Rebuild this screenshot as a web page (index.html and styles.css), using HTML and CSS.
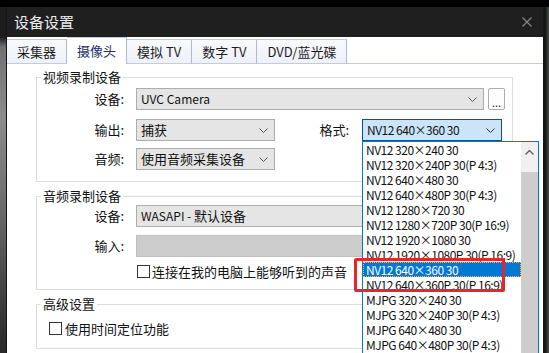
FILE: index.html
```html
<!DOCTYPE html>
<html lang="zh-CN">
<head>
    <meta charset="UTF-8">
    <meta name="viewport" content="width=device-width, initial-scale=1.0">
    <title>设备设置</title>
    <link rel="stylesheet" href="styles.css">
</head>
<body>
    <div class="screen">
        <div class="backdrop-left"></div>

        <div class="dialog">
            <div class="titlebar">
                <span class="title">设备设置</span>
                <svg class="close" width="10" height="10" viewBox="0 0 10 10">
                    <path d="M0.5 0.5 L9.5 9.5 M9.5 0.5 L0.5 9.5" stroke="#8c8c8c" stroke-width="1.1" fill="none"/>
                </svg>
            </div>

            <div class="tabs">
                <div class="tab">采集器</div>
                <div class="tab active">摄像头</div>
                <div class="tab">模拟 TV</div>
                <div class="tab">数字 TV</div>
                <div class="tab">DVD/蓝光碟</div>
            </div>

            <div class="page">
                <!-- video capture -->
                <fieldset class="group group-video">
                    <legend>视频录制设备</legend>
                    <div class="row">
                        <span class="label">设备:</span>
                        <div class="combo combo-device">
                            <span class="latin">UVC Camera</span>
                            <svg class="chevron" width="9" height="5" viewBox="0 0 9 5"><path d="M0.5 0.5 L4.5 4.5 L8.5 0.5" stroke="#555" fill="none"/></svg>
                        </div>
                        <button class="more">...</button>
                    </div>
                    <div class="row row-output">
                        <span class="label">输出:</span>
                        <div class="combo combo-small">
                            <span>捕获</span>
                            <svg class="chevron" width="9" height="5" viewBox="0 0 9 5"><path d="M0.5 0.5 L4.5 4.5 L8.5 0.5" stroke="#555" fill="none"/></svg>
                        </div>
                        <span class="label label-format">格式:</span>
                        <div class="combo combo-small focused">
                            <span class="latin spec">NV12 640×360 30</span>
                            <svg class="chevron" width="9" height="5" viewBox="0 0 9 5"><path d="M0.5 0.5 L4.5 4.5 L8.5 0.5" stroke="#333" fill="none"/></svg>
                        </div>
                    </div>
                    <div class="row row-audio">
                        <span class="label">音频:</span>
                        <div class="combo combo-small">
                            <span>使用音频采集设备</span>
                            <svg class="chevron" width="9" height="5" viewBox="0 0 9 5"><path d="M0.5 0.5 L4.5 4.5 L8.5 0.5" stroke="#555" fill="none"/></svg>
                        </div>
                    </div>
                </fieldset>

                <!-- audio capture -->
                <fieldset class="group group-sound">
                    <legend>音频录制设备</legend>
                    <div class="row">
                        <span class="label">设备:</span>
                        <div class="combo combo-long">
                            <span><span class="latin">WASAPI - </span>默认设备</span>
                        </div>
                    </div>
                    <div class="row row-input">
                        <span class="label">输入:</span>
                        <div class="combo combo-long disabled"></div>
                    </div>
                    <div class="check-row check-listen">
                        <span class="checkbox"></span>
                        <span>连接在我的电脑上能够听到的声音</span>
                    </div>
                </fieldset>

                <!-- advanced -->
                <fieldset class="group group-advanced">
                    <legend>高级设置</legend>
                    <div class="check-row check-seek">
                        <span class="checkbox"></span>
                        <span>使用时间定位功能</span>
                    </div>
                </fieldset>
            </div>

            <!-- open format list -->
            <div class="droplist">
                <div class="items">
                    <div class="item">NV12 320×240 30</div>
                    <div class="item">NV12 320×240P 30(P 4:3)</div>
                    <div class="item">NV12 640×480 30</div>
                    <div class="item">NV12 640×480P 30(P 4:3)</div>
                    <div class="item">NV12 1280×720 30</div>
                    <div class="item">NV12 1280×720P 30(P 16:9)</div>
                    <div class="item">NV12 1920×1080 30</div>
                    <div class="item">NV12 1920×1080P 30(P 16:9)</div>
                    <div class="item selected">NV12 640×360 30</div>
                    <div class="item">NV12 640×360P 30(P 16:9)</div>
                    <div class="item">MJPG 320×240 30</div>
                    <div class="item">MJPG 320×240P 30(P 4:3)</div>
                    <div class="item">MJPG 640×480 30</div>
                    <div class="item">MJPG 640×480P 30(P 4:3)</div>
                </div>
                <div class="scrollbar">
                    <div class="scroll-up">
                        <svg width="9" height="5" viewBox="0 0 9 5"><path d="M0.5 4.5 L4.5 0.5 L8.5 4.5" stroke="#606060" stroke-width="1.4" fill="none"/></svg>
                    </div>
                    <div class="scroll-thumb"></div>
                </div>
            </div>

            <div class="mark"></div>
        </div>

        <div class="backdrop-right"></div>
    </div>
</body>
</html>
```

FILE: styles.css
```css
html, body {
    margin: 0;
    height: 353px;
    overflow: hidden;
}

body {
    background: #000;
    padding-top: 7px;
    box-sizing: border-box;
    font-family: "Noto Sans CJK SC", "Microsoft YaHei", sans-serif;
    font-size: 13px;
    color: #111;
}

/* latin text runs a point smaller than the CJK text */
.latin {
    font-size: 12px;
}

.spec {
    letter-spacing: -0.5px;
}

.screen {
    display: flex;
    height: 346px;
}

.backdrop-left {
    width: 7px;
    background: linear-gradient(180deg, #1c1c1c 0px, #1c1c1c 30px, #6e7072 40px, #8a8c8e 110px, #6a6c6e 200px, #3a3a3a 300px, #2a2a2a 346px);
    border-right: 1px solid #151515;
    box-sizing: border-box;
}

.backdrop-right {
    flex: 1;
    background: linear-gradient(90deg, #161616 0px, #161616 3px, #2f3a30 4px, #3d4a3c 6px);
}

.dialog {
    position: relative;
    width: 536px;
    height: 346px;
    background: #fff;
    display: flex;
    flex-direction: column;
    overflow: hidden;
}

.titlebar {
    height: 30px;
    flex: none;
    background: #1f1f1f;
    display: flex;
    align-items: center;
    padding-left: 7px;
}

.title {
    color: #ececec;
    font-size: 15px;
    line-height: 20px;
}

.close {
    margin-left: auto;
    margin-right: 11px;
}

.tabs {
    display: flex;
    align-items: flex-end;
    height: 26px;
    flex: none;
    border-bottom: 1px solid #c3cbde;
    background: #fff;
}

.tab {
    height: 25px;
    box-sizing: border-box;
    padding: 0 10px;
    line-height: 24px;
    background: linear-gradient(180deg, #f8f9fc, #eef1f8);
    border-top: 1px solid #c3cbde;
    border-right: 1px solid #aeb8d2;
    color: #1c1c1c;
    margin-bottom: -1px;
    border-bottom: 1px solid #c3cbde;
}

.tab.active {
    height: 27px;
    background: #fff;
    border-bottom: none;
    line-height: 26px;
    color: #23306a;
}

.page {
    flex: 1;
}

.group {
    margin: 0 30px 0 29px;
    padding: 0 0 11px 0;
    border: 1px solid #dcdcdc;
    min-width: 0;
}

.group legend {
    margin-left: 4px;
    padding: 0 2px;
    line-height: 16px;
    font-size: 13px;
    color: #111;
}

.group-video {
    margin-top: 5px;
    padding-top: 3px;
}

.group-sound {
    margin-top: 6px;
    padding-top: 1px;
    padding-bottom: 10px;
}

.group-advanced {
    margin-top: 6px;
    padding-top: 9px;
    padding-bottom: 12px;
}

.row {
    display: flex;
    align-items: center;
    height: 22px;
}

.row-output {
    margin-top: 9px;
}

.row-audio {
    margin-top: 7px;
}

.row-input {
    margin-top: 8px;
}

.label {
    width: 87px;
    margin-right: 12px;
    text-align: right;
    line-height: 16px;
}

.label-format {
    width: 74px;
    margin-right: 13px;
}

.combo {
    height: 22px;
    box-sizing: border-box;
    border: 1px solid #adadad;
    background: #e5e5e5;
    display: flex;
    align-items: center;
    padding: 0 6px 0 4px;
    line-height: 18px;
    white-space: nowrap;
}

.combo .chevron {
    margin-left: auto;
    flex: none;
}

.combo-device {
    width: 348px;
}

.combo-small {
    width: 139px;
}

.combo-small.focused {
    width: 140px;
}

.combo-long {
    width: 369px;
}

.combo.focused {
    background: #cce4f7;
    border-color: #005499;
}

.combo.disabled {
    background: #cccccc;
    border-color: #bfbfbf;
}

.more {
    width: 17px;
    height: 22px;
    margin-left: 4px;
    padding: 0;
    border: 1px solid #adadad;
    border-radius: 2px;
    background: #fdfdfd;
    font-family: inherit;
    font-size: 11px;
    line-height: 26px;
    color: #222;
}

.check-row {
    display: flex;
    align-items: center;
    height: 15px;
    line-height: 15px;
}

.check-listen {
    margin-top: 7px;
    padding-left: 100px;
}

.check-seek {
    padding-left: 12px;
}

.checkbox {
    width: 13px;
    height: 13px;
    box-sizing: border-box;
    border: 1px solid #333;
    background: #fff;
    margin-right: 2px;
    flex: none;
}

.check-seek .checkbox {
    margin-right: 3px;
}

/* dropdown of the format combo, drawn over the page */
.droplist {
    position: absolute;
    left: 355px;
    top: 134px;
    width: 177px;
    height: 230px;
    box-sizing: border-box;
    border: 1px solid #0078d7;
    background: #fff;
    display: flex;
}

.items {
    flex: 1;
    overflow: hidden;
}

.item {
    height: 15px;
    line-height: 15px;
    padding-left: 3px;
    white-space: nowrap;
    font-size: 12px;
    letter-spacing: -0.5px;
    color: #111;
}

.item.selected {
    background: #0078d7;
    color: #fff;
    outline: 1px dotted #e9b872;
    outline-offset: -1px;
}

.scrollbar {
    width: 17px;
    display: flex;
    flex-direction: column;
}

.scroll-up {
    height: 30px;
    background: #f0f0f0;
    display: flex;
    justify-content: center;
    padding-top: 8px;
    box-sizing: border-box;
}

.scroll-thumb {
    flex: 1;
    background: #cdcdcd;
}

.mark {
    position: absolute;
    left: 347px;
    top: 251px;
    width: 151px;
    height: 34px;
    box-sizing: border-box;
    border: 3px solid #e8252b;
    border-radius: 2px;
}
```
